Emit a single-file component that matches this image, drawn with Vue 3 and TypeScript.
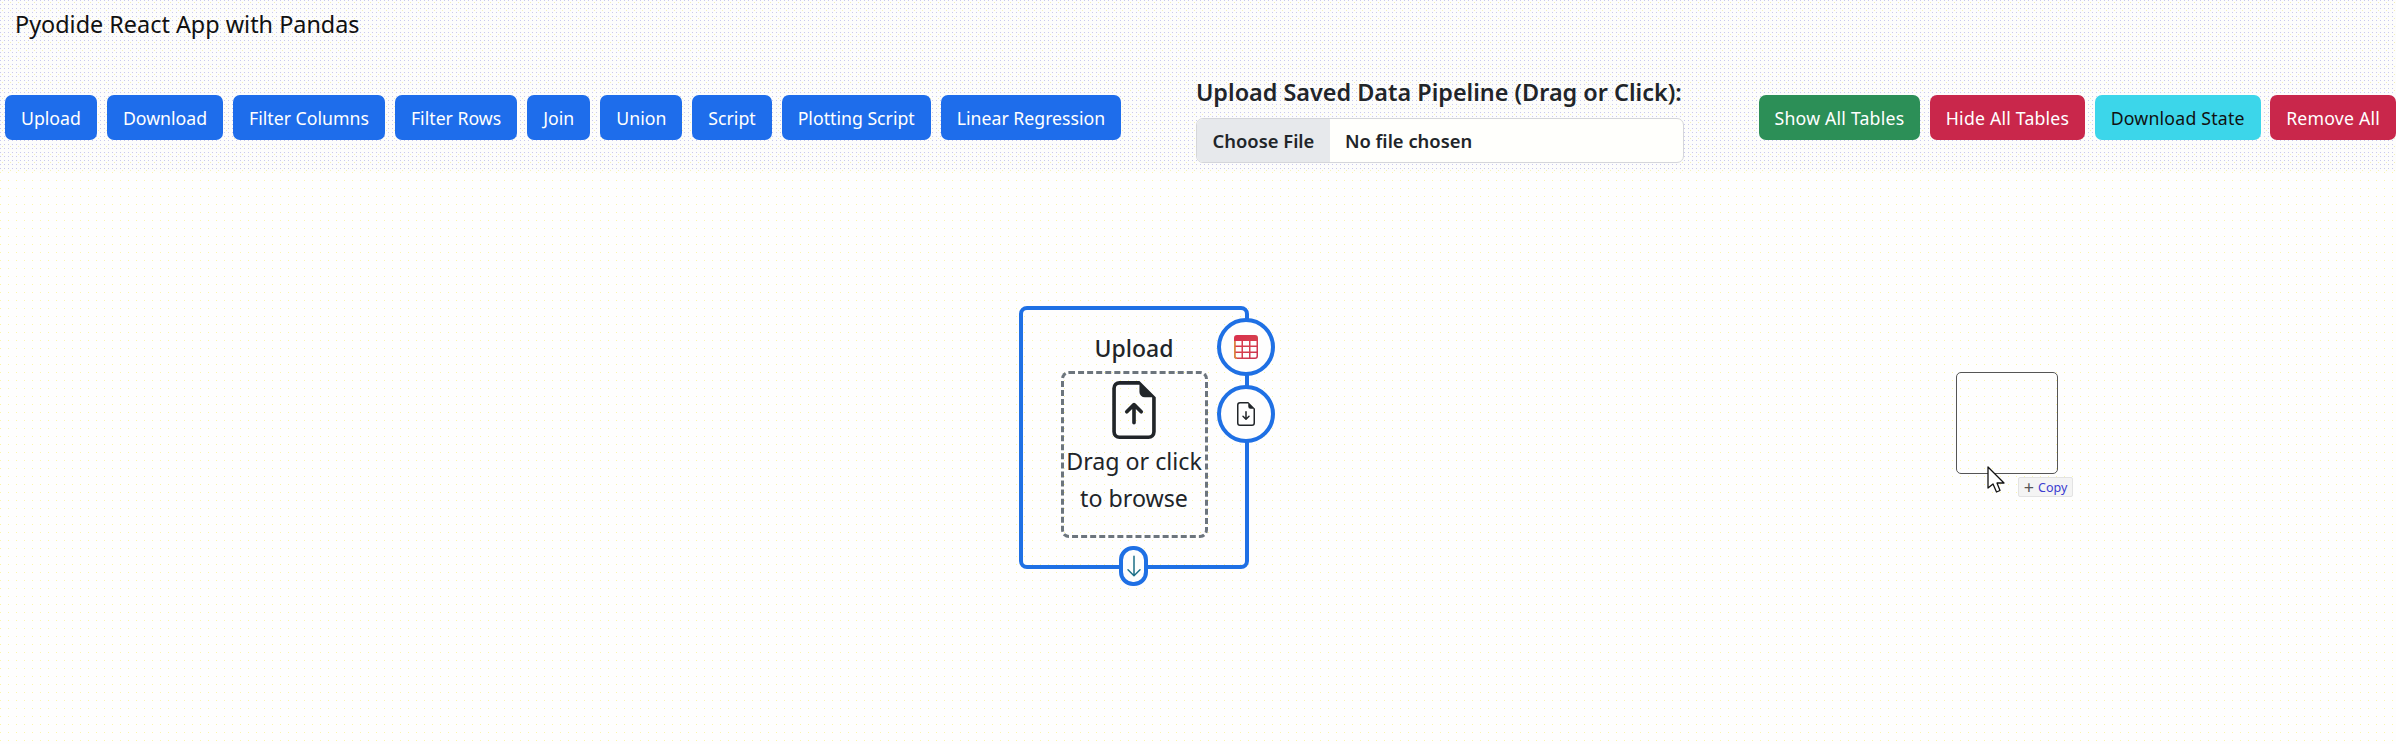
<script setup lang="ts">
const tools: string[] = ['Upload', 'Download', 'Filter Columns', 'Filter Rows', 'Join', 'Union', 'Script', 'Plotting Script', 'Linear Regression']
const actions: { label: string; kind: string }[] = [
  { label: 'Show All Tables', kind: 'green' },
  { label: 'Hide All Tables', kind: 'red' },
  { label: 'Download State', kind: 'cyan' },
  { label: 'Remove All', kind: 'red' },
]
</script>

<template>
  <div class="page">
    <header class="top">
      <h1 class="title">Pyodide React App with Pandas</h1>
      <div class="toolbar">
        <div class="group">
          <button v-for="t in tools" :key="t" class="btn blue">{{ t }}</button>
        </div>
        <div class="pipeline">
          <label class="pipeline-label">Upload Saved Data Pipeline (Drag or Click):</label>
          <div class="file">
            <span class="file-btn">Choose File</span>
            <span class="file-name">No file chosen</span>
          </div>
        </div>
        <div class="group group-right">
          <button v-for="a in actions" :key="a.label" class="btn" :class="a.kind">{{ a.label }}</button>
        </div>
      </div>
    </header>

    <main class="canvas">
      <div class="node">
        <div class="node-title">Upload</div>
        <div class="drop">
          <svg class="drop-icon" viewBox="0 0 16 16" fill="#212529">
            <path d="M8.5 11.5a.5.5 0 0 1-1 0V7.707L6.354 8.854a.5.5 0 1 1-.708-.708l2-2a.5.5 0 0 1 .708 0l2 2a.5.5 0 0 1-.708.708L8.5 7.707z" />
            <path d="M14 14V4.5L9.5 0H4a2 2 0 0 0-2 2v12a2 2 0 0 0 2 2h8a2 2 0 0 0 2-2M9.5 3A1.5 1.5 0 0 0 11 4.5h2V14a1 1 0 0 1-1 1H4a1 1 0 0 1-1-1V2a1 1 0 0 1 1-1h5.5z" />
          </svg>
          <div class="drop-text">Drag or click<br />to browse</div>
        </div>
        <div class="port port-table">
          <svg class="port-icon" viewBox="0 0 16 16">
            <defs>
              <linearGradient id="tableFill" x1="0" y1="0" x2="1" y2="1">
                <stop offset="0" stop-color="#d92f4d" />
                <stop offset="0.55" stop-color="#d63f4e" />
                <stop offset="1" stop-color="#c9304f" />
              </linearGradient>
            </defs>
            <path fill="url(#tableFill)" d="M0 2a2 2 0 0 1 2-2h12a2 2 0 0 1 2 2v12a2 2 0 0 1-2 2H2a2 2 0 0 1-2-2zm15 2h-4v3h4zm0 4h-4v3h4zm0 4h-4v3h3a1 1 0 0 0 1-1zm-5 3v-3H6v3zm-5 0v-3H1v2a1 1 0 0 0 1 1zm-4-4h4V8H1zm0-4h4V4H1zm5-3v3h4V4zm4 4H6v3h4z" />
            <path fill="#dc8a3c" d="M0 4h1v10a1 1 0 0 0 1 1v1a2 2 0 0 1-2-2z" />
          </svg>
        </div>
        <div class="port port-file">
          <svg class="port-icon" viewBox="0 0 16 16" fill="#212529">
            <path d="M8.5 6.5a.5.5 0 0 0-1 0v3.793L6.354 9.146a.5.5 0 1 0-.708.708l2 2a.5.5 0 0 0 .708 0l2-2a.5.5 0 0 0-.708-.708L8.5 10.293z" />
            <path d="M14 14V4.5L9.5 0H4a2 2 0 0 0-2 2v12a2 2 0 0 0 2 2h8a2 2 0 0 0 2-2M9.5 3A1.5 1.5 0 0 0 11 4.5h2V14a1 1 0 0 1-1 1H4a1 1 0 0 1-1-1V2a1 1 0 0 1 1-1h5.5z" />
          </svg>
        </div>
        <div class="pill">
          <svg class="port-icon" viewBox="0 0 16 16" fill="#1c6f86">
            <path fill-rule="evenodd" d="M8 1a.5.5 0 0 1 .5.5v11.793l3.146-3.147a.5.5 0 0 1 .708.708l-4 4a.5.5 0 0 1-.708 0l-4-4a.5.5 0 0 1 .708-.708L7.5 13.293V1.5A.5.5 0 0 1 8 1" />
          </svg>
        </div>
      </div>

      <div class="ghost"></div>
      <svg class="cursor" viewBox="0 0 18 27" width="18" height="27">
        <path d="M1 1 L1 22 L6 18 L9.5 26 L13 24.5 L10 17 L17 17 Z" fill="#fff" stroke="#111" stroke-width="1.3" stroke-linejoin="round" />
      </svg>
      <div class="copy"><span class="plus">+</span><span class="copy-word">Copy</span></div>
    </main>
  </div>
</template>

<style>
html, body { margin: 0; background: #fefefe; }
</style>

<style scoped>
.page {
  width: 2396px;
  height: 744px;
  overflow: hidden;
  font-family: "Noto Sans", "Open Sans", sans-serif;
  color: #212529;
  background-color: #fefefe;
}
.top {
  height: 172px;
  box-sizing: border-box;
  background-color: #fdfdfc;
  background-image:
    conic-gradient(at 1px 1px, transparent 75%, #c9c9ee 0),
    conic-gradient(at 1px 1px, transparent 75%, #f4f0b8 0);
  background-size: 4px 4px, 8px 8px;
  background-position: 0 0, 2px 2px;
  display: flex;
  flex-direction: column;
}
.title {
  margin: 8px 0 0 15px;
  font-size: 23.4px;
  line-height: 33px;
  font-weight: 400;
  color: #111;
}
.toolbar {
  display: flex;
  justify-content: space-between;
  align-items: flex-start;
  padding: 0 0 0 5px;
  margin-top: 36px;
}
.group {
  display: flex;
  gap: 10px;
  margin-top: 18px;
}
.btn {
  height: 45px;
  padding: 0 16px;
  border: none;
  border-radius: 7px;
  font-family: inherit;
  font-size: 17.7px;
  color: #fff;
  white-space: nowrap;
}
.group-right { gap: 9.5px; }
.group-right .btn { letter-spacing: 0.2px; }
.blue { background: #1e6deb; }
.green { background: #2c8f57; }
.red { background: #c9274b; }
.cyan { background: #3cd6ea; color: #111; }
.pipeline {
  width: 488px;
  display: flex;
  flex-direction: column;
}
.pipeline-label {
  font-size: 23.4px;
  font-weight: 600;
  line-height: 30px;
  margin-bottom: 11px;
  white-space: nowrap;
}
.file {
  height: 45px;
  box-sizing: border-box;
  border: 1.5px solid #d5d6da;
  border-radius: 7px;
  display: flex;
  align-items: center;
  overflow: hidden;
  background: #fffffc;
  font-size: 18.4px;
  font-weight: 600;
}
.file-btn {
  height: 100%;
  width: 133px;
  display: flex;
  align-items: center;
  justify-content: center;
  background: #e7e9ec;
}
.file-name { margin-left: 15px; }

.canvas {
  position: relative;
  height: 572px;
  background-color: #fefefe;
  background-image: conic-gradient(at 1px 1px, transparent 75%, #fbf6a8 0);
  background-size: 8px 8px;
}
.node {
  position: absolute;
  left: 1019px;
  top: 134px;
  width: 230px;
  height: 263px;
  box-sizing: border-box;
  border: 4px solid #1f70e4;
  border-radius: 8px;
  display: flex;
  flex-direction: column;
  align-items: center;
}
.node-title {
  margin-top: 22px;
  font-size: 23px;
  font-weight: 500;
  line-height: 32px;
}
.drop {
  margin-top: 7px;
  width: 147px;
  height: 167px;
  box-sizing: border-box;
  border: 3px dashed #6c757d;
  border-radius: 8px;
  display: flex;
  flex-direction: column;
  align-items: center;
  padding-top: 7px;
}
.drop-icon { width: 58px; height: 58px; }
.drop-text {
  margin-top: 4px;
  font-size: 23.2px;
  line-height: 37px;
  text-align: center;
  white-space: nowrap;
}
.port {
  position: absolute;
  right: -30px;
  width: 58px;
  height: 58px;
  box-sizing: border-box;
  border: 4px solid #1f70e4;
  border-radius: 50%;
  background: #fefefe;
  display: flex;
  align-items: center;
  justify-content: center;
}
.port-table { top: 8px; }
.port-file { top: 75px; }
.port-icon { width: 24px; height: 24px; }
.pill {
  position: absolute;
  left: 96px;
  bottom: -21px;
  width: 29px;
  height: 40px;
  box-sizing: border-box;
  border: 4px solid #1f70e4;
  border-radius: 14px;
  background: #fefefe;
  display: flex;
  align-items: center;
  justify-content: center;
}
.pill .port-icon { flex: none; }
.ghost {
  position: absolute;
  left: 1956px;
  top: 200px;
  width: 102px;
  height: 102px;
  box-sizing: border-box;
  border: 1.5px solid #555;
  border-radius: 5px;
}
.cursor {
  position: absolute;
  left: 1987px;
  top: 294px;
}
.copy {
  position: absolute;
  left: 2018px;
  top: 305px;
  width: 55px;
  height: 20px;
  box-sizing: border-box;
  border: 1px solid #e3e3e3;
  border-radius: 2px;
  background: #f4f4f4;
  display: flex;
  align-items: center;
  justify-content: center;
  gap: 4px;
  font-size: 12.5px;
}
.plus { color: #555; font-size: 18px; line-height: 1; }
.copy-word { color: #3b3bd0; }
</style>
